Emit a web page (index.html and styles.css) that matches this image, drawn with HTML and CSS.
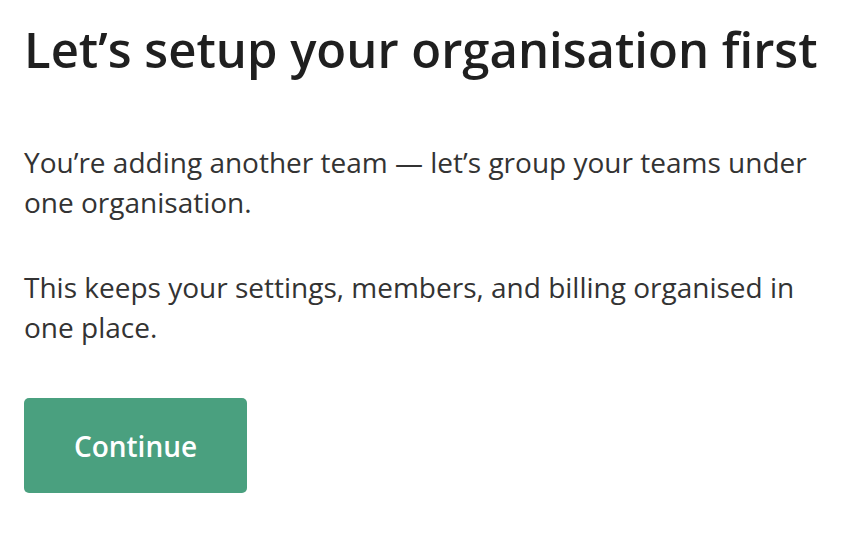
FILE: index.html
```html
<!DOCTYPE html>
<html lang="en">
<head>
<meta charset="utf-8">
<link rel="stylesheet" href="styles.css">
</head>
<body>
<main class="page">
  <h1 class="title">Let’s setup your organisation first</h1>
  <p class="text">You’re adding another team — let’s group your teams under one organisation.</p>
  <p class="text">This keeps your settings, members, and billing organised in one place.</p>
  <button class="btn" type="button">Continue</button>
</main>
</body>
</html>
```

FILE: styles.css
```css
html, body {
  margin: 0;
  padding: 0;
  background: #ffffff;
}
.page {
  font-family: "Open Sans", "Liberation Sans", sans-serif;
  padding: 18px 24px;
  width: 812px;
}
.title {
  margin: 0;
  font-size: 49px;
  font-weight: 600;
  line-height: 62px;
  color: #1f1f1f;
}
.text {
  margin: 62px 0 0;
  font-size: 28px;
  line-height: 40px;
  color: #333333;
}
.text + .text {
  margin-top: 45px;
}
.btn {
  margin-top: 51px;
  display: block;
  width: 223px;
  height: 95px;
  border: none;
  border-radius: 5px;
  background: #4aa07f;
  color: #ffffff;
  font-family: "Open Sans", "Liberation Sans", sans-serif;
  font-size: 28px;
  font-weight: 600;
}
```
